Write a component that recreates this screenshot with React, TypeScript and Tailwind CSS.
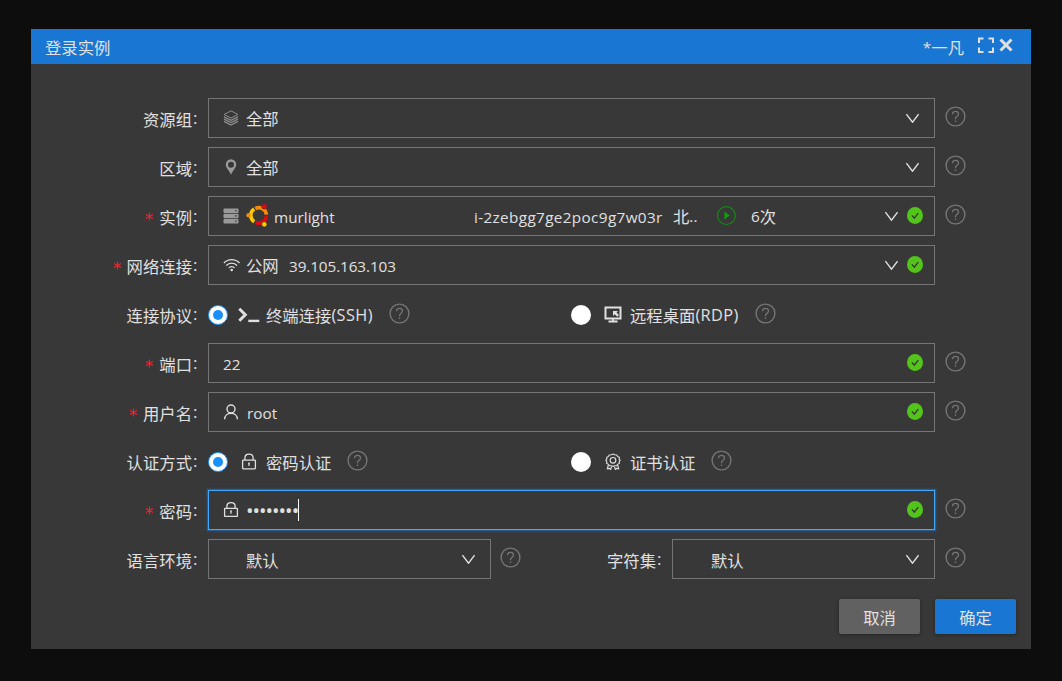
import type { ReactNode } from "react";

type IconProps = { className?: string };

const latin = "font-['Open_Sans','Noto_Sans_CJK_SC',sans-serif] text-[15.3px]";
const latinCaps = "pt-[1px] font-['Open_Sans','Noto_Sans_CJK_SC',sans-serif] text-[16.3px] tracking-[0.4px]";

function HelpIcon({ className = "" }: IconProps) {
  return (
    <svg viewBox="0 0 21 21" className={`h-[21px] w-[21px] shrink-0 text-[#757575] ${className}`} fill="none" stroke="currentColor">
      <circle cx="10.5" cy="10.5" r="9.4" strokeWidth="1.4" />
      <path d="M7.5 8.2C7.5 6.3 8.7 5.3 10.5 5.3s3 1.1 3 2.7c0 1.300-.8 1.900-1.700 2.600-.8.6-1.300 1.100-1.300 2.300v.3M10.500 14.500v1.400" strokeWidth="1.300" />
    </svg>
  );
}

function ChevronIcon({ className = "" }: IconProps) {
  return (
    <svg viewBox="0 0 14 10" className={`h-[10px] w-[14px] shrink-0 ${className}`} fill="none" stroke="#e0e0e0" strokeWidth="1.4">
      <path d="M1.400 1.200 7.500 9.200 13.600 1.200" />
    </svg>
  );
}

function CheckIcon() {
  return (
    <svg viewBox="0 0 16 17" className="h-[17px] w-4 shrink-0">
      <ellipse cx="8" cy="8.500" rx="8" ry="8.500" fill="#52c41a" />
      <path d="m4.900 8.400 2.400 2.700 4-5" fill="none" stroke="#383838" strokeWidth="1.400" />
    </svg>
  );
}

function LayersIcon() {
  return (
    <svg viewBox="0 0 16 16" className="h-4 w-4" fill="none" stroke="#8c8c8c" strokeWidth="1">
      <path d="M8 .900 15 4.500 8 8 1 4.500z" />
      <path d="m1 6.800 7 3.500 7-3.500M1 9.100l7 3.500 7-3.500M1 11.400l7 3.700 7-3.700" strokeWidth="1.300" />
    </svg>
  );
}

function PinIcon() {
  return (
    <svg viewBox="0 0 16 16" className="mt-px h-4 w-4" fill="#9a9a9a">
      <path fillRule="evenodd" d="M8 .3a5.200 5.200 0 0 0-5.200 5.200C2.800 8.800 6.200 11.400 8 15.700c1.800-4.300 5.200-6.900 5.200-10.200A5.200 5.200 0 0 0 8 .3zm0 2.500a3 3 0 1 1 0 6 3 3 0 0 1 0-6z" />
    </svg>
  );
}

function ServerIcon() {
  return (
    <svg viewBox="0 0 16 16" className="h-4 w-4">
      {[0.5, 5.7, 10.9].map((y) => (
        <g key={y}>
          <rect x=".5" y={y} width="15" height="4.500" rx="1" fill="#999" />
          <circle cx="12.900" cy={y + 2.2} r=".8" fill="#383838" />
        </g>
      ))}
    </svg>
  );
}

function UbuntuIcon() {
  return (
    <svg viewBox="0 0 23 23" className="h-[23px] w-[23px]" fill="none" strokeWidth="3.600">
      <path d="M9.300 4.600A7.600 7.600 0 0 1 20.400 10.600" stroke="#f58a07" />
      <path d="M20.400 12.200A7.600 7.600 0 0 1 9.500 18.400" stroke="#e30613" />
      <path d="M8.200 17.700A7.600 7.600 0 0 1 8.200 5.100" stroke="#fcc800" />
      <circle cx="18.300" cy="2.500" r="2.600" fill="#e30613" stroke="#383838" strokeWidth=".6" />
      <circle cx="2.500" cy="11.200" r="2.200" fill="#f58a07" stroke="none" />
      <circle cx="18.300" cy="20.300" r="2.600" fill="#fcc800" stroke="#383838" strokeWidth=".6" />
    </svg>
  );
}

function WifiIcon() {
  return (
    <svg viewBox="0 0 16 14" className="h-[14px] w-4 overflow-visible" fill="none" stroke="#dedede" strokeWidth="1.300">
      <path d="M.9 5C5.200.5 12.200.5 16.500 5M3.300 7.500c3-3.200 7.800-3.200 10.800 0M5.800 9.900c1.600-1.800 4.200-1.800 5.800 0" />
      <circle cx="8.700" cy="12" r="1.300" fill="#dedede" stroke="none" />
    </svg>
  );
}

function UserIcon() {
  return (
    <svg viewBox="0 0 16 16" className="h-4 w-4" fill="none" stroke="#dedede" strokeWidth="1.400">
      <circle cx="8" cy="5" r="4" />
      <path d="M1.600 15.200c.1-3.500 2.700-6 6.400-6s6.300 2.500 6.400 6" />
    </svg>
  );
}

function LockIcon({ className = "" }: IconProps) {
  return (
    <svg viewBox="0 0 16 17" className={`h-[17px] w-4 ${className}`} fill="none" stroke="#dedede" strokeWidth="1.300">
      <rect x="1.600" y="7.200" width="12.800" height="8.600" rx=".5" />
      <path d="M3.900 7V4.900C3.900 2.500 5.500 1.200 8 1.200s4.100 1.300 4.100 3.700V7M8 9.800v3.100" />
      <circle cx="8" cy="10.200" r=".8" fill="#dedede" stroke="none" />
    </svg>
  );
}

function AwardIcon() {
  return (
    <svg viewBox="0 0 16 17" className="h-[17px] w-4" fill="none" stroke="#dedede" strokeWidth="1.200">
      <path d="m8 .9 1.700.9 2 .1.900 1.700 1.700 1-.1 1.900.9 1.400-.9 1.500.1 1.900-1.700 1-.9 1.700-2-.1L8 14.600l-1.700-.7-2 .1-.9-1.700-1.700-1 .1-1.900-.9-1.500.9-1.400-.1-1.900 1.700-1 .9-1.700 2-.1z" transform="translate(0 .2) scale(1 .9)" />
      <circle cx="8" cy="7.300" r="2.800" />
      <path d="m3.300 12.200-.9 3.600 2-.4 1.200 1.200 1-3M12.700 12.200l.9 3.600-2-.4-1.200 1.200-1-3" />
    </svg>
  );
}

function TerminalIcon() {
  return (
    <svg viewBox="0 0 22 16" className="h-4 w-[22px]" fill="none" stroke="#e0e0e0">
      <path d="m1.300 1.700 6 6-6 6" strokeWidth="3" />
      <path d="M10.300 13.900h11" strokeWidth="2.400" />
    </svg>
  );
}

function DesktopIcon() {
  return (
    <svg viewBox="0 0 18 17" className="h-[17px] w-[18px]" fill="none" stroke="#e0e0e0">
      <path d="M1.500 1.400h15v11.100h-15z" strokeWidth="2" />
      <path d="M9 12.500v3M4.500 15.500h9" strokeWidth="1.800" />
      <path d="M9 5h5L12.500 6.500l2.500 2.500-1.800 1.700L10.700 8.200 9 10z" fill="#e0e0e0" stroke="none" />
    </svg>
  );
}

function PlayIcon() {
  return (
    <svg viewBox="0 0 20 20" className="h-5 w-5" fill="none">
      <circle cx="10.400" cy="9.600" r="8.900" stroke="#138c13" strokeWidth="1.200" />
      <path d="M8.400 5.600v8l5.500-4z" fill="#0c9d0c" />
    </svg>
  );
}

function Label({ text, required = false, className = "w-[177px]" }: { text: string; required?: boolean; className?: string }) {
  return (
    <div className={`flex shrink-0 items-center justify-end pr-[8px] whitespace-nowrap ${className}`}>
      {required && (
        <svg viewBox="0 0 9 9" className="mt-[1px] mr-[5px] h-[9px] w-[9px]" stroke="#f5222d" strokeWidth="1.100">
          <path d="M4.500.500v8M1 2.500l7 4M8 2.500l-7 4" />
        </svg>
      )}
      <span className="pt-[1px]">{text}</span>
      <span className="w-[8px] pl-[1px] font-['Open_Sans',sans-serif] text-[17px]">:</span>
    </div>
  );
}

type FieldProps = {
  icon?: ReactNode;
  children: ReactNode;
  select?: boolean;
  valid?: boolean;
  focused?: boolean;
  className?: string;
};

function Field({ icon, children, select, valid, focused, className = "w-[727px]" }: FieldProps) {
  const frame = focused ? "border-[#40a9ff] shadow-[0_0_0_1px_rgba(24,144,255,0.35),0_0_2px_2px_rgba(24,144,255,0.15)]" : "border-[#757575]";
  return (
    <div className={`flex h-10 shrink-0 items-center border pl-[14px] ${frame} ${className}`}>
      {icon !== undefined && <div className="mr-[7px] flex h-4 w-4 shrink-0 items-center justify-center pb-[1px]">{icon}</div>}
      <div className="flex min-w-0 flex-1 items-center">{children}</div>
      <div className={`flex items-center gap-[9px] ${valid ? "pr-[11px] pb-[1px]" : "pr-[15px]"}`}>
        {select && <ChevronIcon className={valid ? "mt-[1px]" : ""} />}
        {valid && <CheckIcon />}
      </div>
    </div>
  );
}

function Row({ children }: { children: ReactNode }) {
  return <div className="flex h-10 items-center">{children}</div>;
}

function Help({ className = "ml-[10px]" }: { className?: string }) {
  return <HelpIcon className={`mb-[3px] ${className}`} />;
}

function Option({ checked, icon, children }: { checked?: boolean; icon: ReactNode; children: ReactNode }) {
  return (
    <div className="flex w-[363px] shrink-0 items-center">
      <span className={`mt-[1px] flex h-5 w-5 shrink-0 items-center justify-center rounded-full bg-white ${checked ? "border border-[#1890ff]" : ""}`}>
        {checked && <span className="h-[10px] w-[10px] rounded-full bg-[#1890ff]" />}
      </span>
      <span className={`flex shrink-0 items-center justify-center pt-[1px] pl-[4px] ${checked ? "w-[38px]" : "w-[39px]"}`}>{icon}</span>
      <span className="flex items-center pt-[1px] whitespace-nowrap">{children}</span>
      <HelpIcon className="mb-[2px] ml-[16px]" />
    </div>
  );
}

export default function App() {
  return (
    <div className="h-[681px] w-[1062px] bg-[#0d0d0d] pt-[29px] pl-[31px] font-['Noto_Sans_CJK_SC',sans-serif] text-[16.35px] leading-6 text-[#e0e0e0]">
      <section className="flex h-[620px] w-[1000px] flex-col bg-[#383838]">
        <header className="flex h-[35px] items-center justify-between bg-[#1976d2] pr-[18px] pl-[14px]">
          <h1>登录实例</h1>
          <div className="flex items-center">
            <span className="mr-[14px] flex"><span className={latin}>*</span>一凡</span>
            <svg viewBox="0 0 16 16" className="mr-[5px] mb-[3px] h-4 w-4" fill="none" stroke="#e0e0e0" strokeWidth="2">
              <path d="M1 6V1.500h4.500M10.500 1.500H15V6M15 10.500v4.500h-4.500M5.500 15H1v-4.500" />
            </svg>
            <svg viewBox="0 0 14 14" className="mb-[3px] h-[14px] w-[14px]" stroke="#e0e0e0" strokeWidth="3">
              <path d="m1.500 1.500 11 11M12.500 1.500l-11 11" />
            </svg>
          </div>
        </header>
        <form className="flex flex-col gap-[9px] pt-[34px]">
          <Row>
            <Label text="资源组" />
            <Field icon={<LayersIcon />} select><span>全部</span></Field>
            <Help />
          </Row>
          <Row>
            <Label text="区域" />
            <Field icon={<PinIcon />} select><span>全部</span></Field>
            <Help />
          </Row>
          <Row>
            <Label text="实例" required />
            <Field icon={<ServerIcon />} select valid>
              <span className="mb-px flex w-[28px] shrink-0"><UbuntuIcon /></span>
              <span className={`w-[200px] shrink-0 pt-[2px] ${latin}`}>murlight</span>
              <span className={`w-[199px] shrink-0 pt-[2px] tracking-[0.35px] ${latin}`}>i-2zebgg7ge2poc9g7w03r</span>
              <span className="flex w-[43px] shrink-0">北<span className={latin}>..</span></span>
              <span className="w-[35px] shrink-0"><PlayIcon /></span>
              <span className="flex"><span className={latin}>6</span>次</span>
            </Field>
            <Help />
          </Row>
          <Row>
            <Label text="网络连接" required />
            <Field icon={<WifiIcon />} select valid>
              <span className="w-[43px] shrink-0">公网</span>
              <span className={`pt-[1px] tracking-[-0.1px] ${latin}`}>39.105.163.103</span>
            </Field>
          </Row>
          <Row>
            <Label text="连接协议" />
            <Option checked icon={<TerminalIcon />}>终端连接<span className={latinCaps}>(SSH)</span></Option>
            <Option icon={<DesktopIcon />}>远程桌面<span className={latinCaps}>(RDP)</span></Option>
          </Row>
          <Row>
            <Label text="端口" required />
            <Field valid><span className={`pt-[1px] ${latin}`}>22</span></Field>
            <Help />
          </Row>
          <Row>
            <Label text="用户名" required />
            <Field icon={<UserIcon />} valid><span className={`pt-[1px] pl-px ${latin}`}>root</span></Field>
            <Help />
          </Row>
          <Row>
            <Label text="认证方式" />
            <Option checked icon={<LockIcon />}>密码认证</Option>
            <Option icon={<AwardIcon />}>证书认证</Option>
          </Row>
          <Row>
            <Label text="密码" required />
            <Field icon={<LockIcon className="scale-y-95" />} valid focused>
              <span className="w-[52px] pt-[1px] font-['Open_Sans',sans-serif] text-[20px] tracking-[-1px] whitespace-nowrap">••••••••</span>
              <span className="h-[22px] w-px bg-white" />
            </Field>
            <Help />
          </Row>
          <Row>
            <Label text="语言环境" />
            <Field icon={null} select className="w-[283px]"><span className="pt-[1px]">默认</span></Field>
            <Help className="ml-[9px]" />
            <Label text="字符集" className="w-[151px]" />
            <Field icon={null} select className="w-[263px]"><span className="pt-[1px] pl-[1px]">默认</span></Field>
            <Help />
          </Row>
        </form>
        <footer className="mt-5 flex justify-end gap-[15px] pr-[15px]">
          <button className="h-[35px] w-[81px] rounded-[2px] bg-[#616161] shadow-[0_1px_4px_rgba(0,0,0,0.35)]">取消</button>
          <button className="h-[35px] w-[81px] rounded-[2px] bg-[#1976d2] shadow-[0_1px_4px_rgba(0,0,0,0.35)]">确定</button>
        </footer>
      </section>
    </div>
  );
}
